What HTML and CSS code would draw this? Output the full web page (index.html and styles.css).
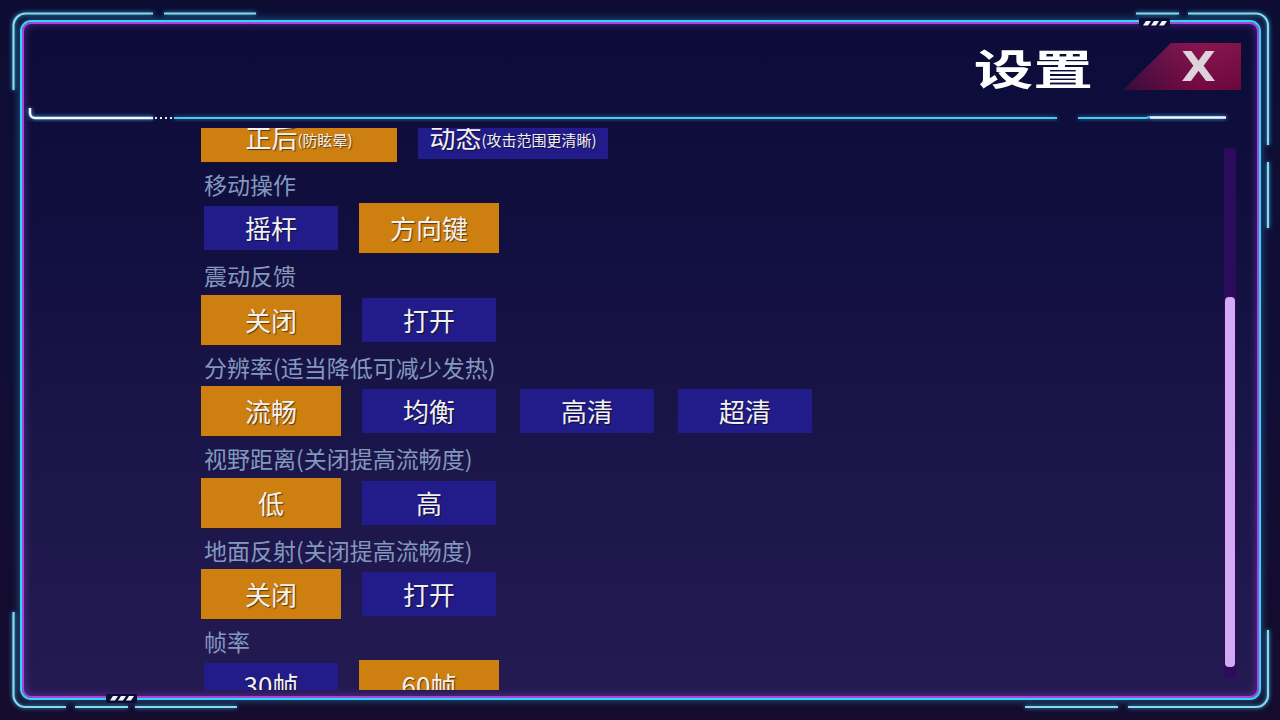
FILE: index.html
```html
<!DOCTYPE html>
<html lang="zh-CN">
<head>
<meta charset="utf-8">
<title>设置</title>
<link rel="stylesheet" href="styles.css">
</head>
<body>
<div class="screen">
  <svg class="deco" width="1280" height="720" viewBox="0 0 1280 720">
    <g class="line">
      <path d="M13.5,90 V25 A12,12 0 0 1 25.5,13.5 H153"/>
      <path d="M164,13.5 H256"/>
      <path d="M1136,13.5 H1179"/>
      <path d="M1188,13.5 H1256 A12,12 0 0 1 1268,25.5 V145"/>
      <path d="M1268,162 V228"/>
      <path d="M13.5,612 V695 A12,12 0 0 0 25.5,707 H66"/>
      <path d="M75,707 H128"/>
      <path d="M135,707 H237"/>
      <path d="M1025,707 H1118"/>
      <path d="M1128,707 H1256 A12,12 0 0 0 1268,695 V630"/>
    </g>
    <rect class="pill" x="1139" y="18" width="31" height="9" rx="2"/>
    <g class="dash">
      <polygon points="1143,25.5 1146,21 1151,21 1148,25.5"/>
      <polygon points="1151,25.5 1154,21 1159,21 1156,25.5"/>
      <polygon points="1159,25.5 1162,21 1167,21 1164,25.5"/>
    </g>
    <rect class="pill" x="106" y="694" width="31" height="9" rx="2"/>
    <g class="dash">
      <polygon points="110,700.5 113,696 118,696 115,700.5"/>
      <polygon points="118,700.5 121,696 126,696 123,700.5"/>
      <polygon points="126,700.5 129,696 134,696 131,700.5"/>
    </g>
  </svg>

  <div class="panel">
    <header class="head">
      <h1 class="title">设置</h1>
      <button class="close" type="button"><span>X</span></button>
    </header>

    <svg class="sep" width="1236" height="16" viewBox="0 0 1236 16">
      <path class="sep-white" d="M8,2 V7 A5,5 0 0 0 13,12 H131"/>
      <path class="sep-dots" d="M133,12 H152"/>
      <path class="sep-cyan" d="M152,12 H1035"/>
      <path class="sep-cyan" d="M1056,12 H1124 L1128,11"/>
      <path class="sep-white" d="M1128,11.5 H1204"/>
    </svg>

    <div class="body">
      <div class="viewport">
        <div class="list">
          <div class="opts">
            <div class="opt wide on">正后<small>(防眩晕)</small></div>
            <div class="opt wide off">动态<small>(攻击范围更清晰)</small></div>
          </div>

          <div class="label">移动操作</div>
          <div class="opts">
            <div class="opt off">摇杆</div>
            <div class="opt on">方向键</div>
          </div>

          <div class="label">震动反馈</div>
          <div class="opts">
            <div class="opt on">关闭</div>
            <div class="opt off">打开</div>
          </div>

          <div class="label">分辨率(适当降低可减少发热)</div>
          <div class="opts">
            <div class="opt on">流畅</div>
            <div class="opt off">均衡</div>
            <div class="opt off">高清</div>
            <div class="opt off">超清</div>
          </div>

          <div class="label">视野距离(关闭提高流畅度)</div>
          <div class="opts">
            <div class="opt on">低</div>
            <div class="opt off">高</div>
          </div>

          <div class="label">地面反射(关闭提高流畅度)</div>
          <div class="opts">
            <div class="opt on">关闭</div>
            <div class="opt off">打开</div>
          </div>

          <div class="label">帧率</div>
          <div class="opts">
            <div class="opt off">30帧</div>
            <div class="opt on">60帧</div>
          </div>
        </div>
      </div>
      <div class="scrollbar"><div class="thumb"></div></div>
    </div>
  </div>
</div>
</body>
</html>
```

FILE: styles.css
```css
* { box-sizing: border-box; }

html, body {
  margin: 0;
  padding: 0;
  width: 1280px;
  height: 720px;
  overflow: hidden;
}

body {
  font-family: "Noto Sans CJK SC", "Noto Sans", sans-serif;
  background: linear-gradient(180deg, #0d0d34 0%, #110e35 50%, #150b2d 100%);
}

.screen {
  position: relative;
  width: 1280px;
  height: 720px;
  padding: 20px;
}

/* decorative outer frame ornaments overlaying the page */
.deco {
  position: absolute;
  left: 0;
  top: 0;
  z-index: 5;
  pointer-events: none;
}
.deco .line path {
  fill: none;
  stroke: #86daf0;
  stroke-width: 2.2;
  filter: drop-shadow(0 0 2px rgba(60, 200, 240, 0.9));
}
.deco .pill { fill: #0d0d33; }
.deco .dash polygon { fill: #f2f6ff; }

.panel {
  width: 1241px;
  height: 680px;
  border: 2px solid #34d4f6;
  border-radius: 11px;
  background: linear-gradient(180deg, #0c0c39 0%, #0f0e3d 25%, #1a1548 60%, #241a52 100%);
  box-shadow:
    inset 0 0 0 2px #a844e0,
    inset 0 0 8px 2px rgba(170, 70, 230, 0.45),
    0 0 8px rgba(52, 200, 250, 0.45);
  display: flex;
  flex-direction: column;
}

.head {
  height: 84px;
  padding: 5px 18px 0 0;
  display: flex;
  justify-content: flex-end;
  align-items: center;
}

.title {
  margin: 0 30px 0 0;
  font-size: 42px;
  line-height: 1;
  font-weight: 700;
  letter-spacing: 0;
  color: #ffffff;
  transform: scaleX(1.42);
  transform-origin: right center;
}

.close {
  width: 118px;
  height: 47px;
  border: 0;
  padding: 0 27px 0 0;
  margin: 0;
  display: flex;
  justify-content: flex-end;
  align-items: center;
  clip-path: polygon(48px 0, 100% 0, 100% 100%, 0 100%);
  background:
    linear-gradient(180deg, rgba(255, 255, 255, 0.04), rgba(0, 0, 0, 0.14)),
    linear-gradient(90deg, #3e0e45 0%, #6a0c48 35%, #870a4a 65%, #7c0a44 100%);
}
.close span {
  font-family: "DejaVu Sans", sans-serif;
  font-weight: 700;
  font-size: 40px;
  line-height: 1;
  color: #ddd3dc;
  transform: scaleX(1.12);
}

.sep {
  display: block;
  flex: none;
}
.sep path { fill: none; }
.sep-white {
  stroke: #eef8ff;
  stroke-width: 2.5;
  filter: drop-shadow(0 0 2px rgba(80, 210, 255, 0.9));
}
.sep-dots {
  stroke: #dfeeff;
  stroke-width: 2;
  stroke-dasharray: 2 3;
}
.sep-cyan {
  stroke: #49c8f0;
  stroke-width: 2;
  filter: drop-shadow(0 0 2px rgba(60, 200, 250, 0.7));
}

.body {
  flex: 1;
  display: flex;
  padding-left: 179px;
}

.viewport {
  flex: 1;
  height: 562px;
  margin-top: 6px;
  overflow: hidden;
}

.list {
  margin-top: -16px;
}

.label {
  height: 30px;
  line-height: 30px;
  margin: 7px 0 4.4px;
  padding-left: 3px;
  font-size: 23px;
  color: #8398be;
  white-space: nowrap;
}

.opts {
  display: flex;
  gap: 18px;
}

.opt {
  width: 140px;
  height: 50px;
  display: flex;
  align-items: center;
  justify-content: center;
  font-size: 26px;
  line-height: 1;
  color: #f1f1f1;
  text-shadow: 1px 1px 1px rgba(0, 0, 0, 0.55);
  white-space: nowrap;
}
.opt.wide { width: 196px; }
.opt small {
  font-size: 15px;
  margin-top: 4px;
}
.opt.on {
  background: #cd7f0f;
  box-shadow: 0 1px 0 rgba(60, 20, 0, 0.5);
}
.opt.off {
  border: 3px solid transparent;
  background: #221c8a;
  background-clip: padding-box;
}

.scrollbar {
  flex: none;
  width: 12px;
  height: 530px;
  margin: 26px 23px 0 8px;
  background: #2c0a5c;
  border-radius: 2px;
  padding: 149px 1px 0;
}
.thumb {
  height: 370px;
  background: #d3aaf3;
  border-radius: 4px;
}
```
